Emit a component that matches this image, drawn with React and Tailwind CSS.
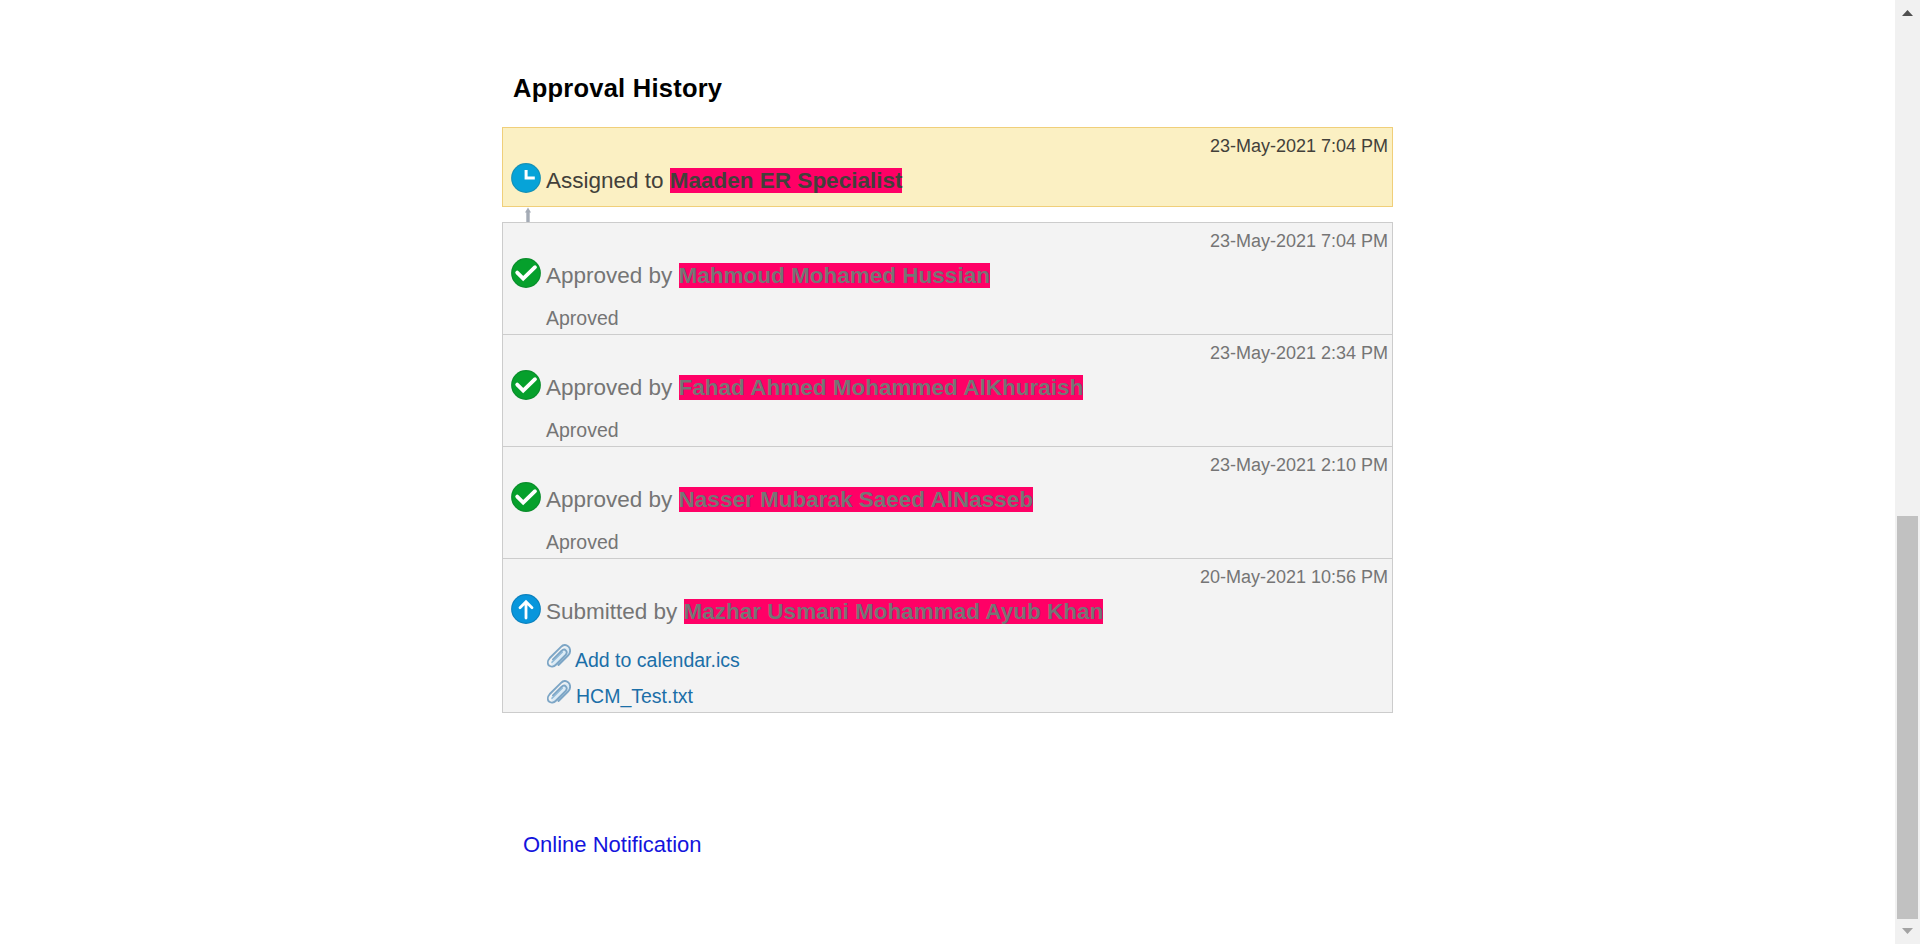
const GRAY = "text-[#757575]";

function ClockIcon() {
  return (
    <svg width="30" height="30" viewBox="0 0 30 30" className="shrink-0">
      <circle cx="15" cy="15" r="14.9" fill="#1590b5" />
      <circle cx="15" cy="15" r="13.8" fill="#06a3d8" />
      <path d="M15.1 7V15H23.8" fill="none" stroke="#fff" strokeWidth="3" />
    </svg>
  );
}

function CheckIcon() {
  return (
    <svg width="30" height="30" viewBox="0 0 30 30" className="shrink-0">
      <circle cx="15" cy="15" r="14.9" fill="#0a8d2b" />
      <circle cx="15" cy="15" r="13.8" fill="#06a02c" />
      <path d="M6.2 14.6L12.2 20.6L24 9.2" fill="none" stroke="#fff" strokeWidth="3.8" strokeLinecap="round" />
    </svg>
  );
}

function UpIcon() {
  return (
    <svg width="30" height="30" viewBox="0 0 30 30" className="shrink-0">
      <circle cx="15" cy="15" r="14.9" fill="#0b80bd" />
      <circle cx="15" cy="15" r="13.8" fill="#0896dc" />
      <path d="M15 24V8.5M9 13.8L15 7.8L21 13.8" fill="none" stroke="#fff" strokeWidth="2.8" strokeLinecap="round" />
    </svg>
  );
}

function ClipIcon() {
  return (
    <svg width="24" height="24" viewBox="0 0 24 24" className="mt-px shrink-0" fill="none" strokeLinecap="round">
      <path d="M7.5 18.5L18.8 7.2" stroke="#dcebf5" strokeWidth="7" />
      <path d="M11.5 21L21.5 11C24 8 23.3 4.2 21.3 2.4C19 .6 16 .8 14 2.8L2.8 14C.4 16.8 .4 20 2 21.6C4 23.2 7 22.6 8.6 21L18.4 11.2C20.2 9.2 20 7.4 18.8 6.4C17.6 5.2 15.8 5.6 14.4 7L6 15.4" stroke="#7da6c6" strokeWidth="1.9" />
      <path d="M5 18.2L15.4 8" stroke="#8fb8d6" strokeWidth="1.5" />
    </svg>
  );
}

function Row({ date, icon, action, name, className, children }) {
  return (
    <div className={className}>
      <div className="h-[26px] pt-[8px] pr-[4px] text-right text-[18px] leading-[21px]">{date}</div>
      <div className="flex h-[40px] items-start pt-[9px] pl-[8px]">
        {icon}
        <div className="pt-[5px] pl-[5px] text-[22.5px] leading-[26px] whitespace-pre">
          {action} <b className="bg-[#ff0066]">{name}</b>
        </div>
      </div>
      {children}
    </div>
  );
}

const approvals = [
  { date: "23-May-2021 7:04 PM", name: "Mahmoud Mohamed Hussian" },
  { date: "23-May-2021 2:34 PM", name: "Fahad Ahmed Mohammed AlKhuraish" },
  { date: "23-May-2021 2:10 PM", name: "Nasser Mubarak Saeed AlNasseb" },
];

export default function App() {
  return (
    <div className="flex h-[944px] justify-between overflow-hidden bg-white font-['Liberation_Sans',Arial,sans-serif]">
      <main className="ml-[502px] w-[891px] pt-[72px]">
        <h1 className="h-[55px] pl-[11px] text-[25.5px] leading-[32px] font-bold tracking-[0.24px] text-black">Approval History</h1>
        <Row
          className="h-[80px] border border-[#f0cf7a] bg-[#fbf0c3] text-[#42403a]"
          date="23-May-2021 7:04 PM"
          icon={<ClockIcon />}
          action="Assigned to"
          name="Maaden ER Specialist"
        />
        <div className="flex h-[15px] pl-[22px]">
          <svg width="8" height="15" viewBox="0 0 8 15" fill="#a4abb5">
            <path d="M4 .5L7 5.5H1ZM2.3 5H5.7V15H2.3Z" />
          </svg>
        </div>
        <div className="h-[491px] border border-[#cccccc] bg-[#f3f3f3]">
          {approvals.map((a) => (
            <Row
              key={a.date}
              className={`h-[112px] border-b border-[#cccccc] ${GRAY}`}
              date={a.date}
              icon={<CheckIcon />}
              action="Approved by"
              name={a.name}
            >
              <div className="pt-[18px] pl-[43px] text-[19.5px] leading-[22px]">Aproved</div>
            </Row>
          ))}
          <Row className={GRAY} date="20-May-2021 10:56 PM" icon={<UpIcon />} action="Submitted by" name="Mazhar Usmani Mohammad Ayub Khan">
            <div className="pt-[18px] pl-[44px] text-[19.5px] leading-[22px] text-[#1b6fa8]">
              <div className="flex h-[36px]">
                <ClipIcon />
                <span className="pt-[6px] pl-[4px]">Add to calendar.ics</span>
              </div>
              <div className="flex">
                <ClipIcon />
                <span className="pt-[6px] pl-[5px]">HCM_Test.txt</span>
              </div>
            </div>
          </Row>
        </div>
        <a className="mt-[119px] ml-[21px] block text-[22px] leading-[26px] text-[#1414dd]">Online Notification</a>
      </main>
      <div className="flex w-[25px] flex-col items-center bg-[#f1f1f1]">
        <svg width="25" height="516" viewBox="0 0 25 516">
          <path d="M7 16H18L12.5 10Z" fill="#505050" />
        </svg>
        <div className="h-[403px] w-[21px] shrink-0 bg-[#c1c1c1]" />
        <svg width="25" height="25" viewBox="0 0 25 25">
          <path d="M7 9H18L12.5 15Z" fill="#a3a3a3" />
        </svg>
      </div>
    </div>
  );
}
